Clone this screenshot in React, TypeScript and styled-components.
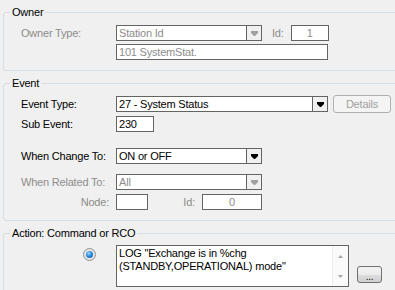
import React from 'react';
import styled, { createGlobalStyle } from 'styled-components';

const GlobalStyle = createGlobalStyle`
  html, body { margin: 0; padding: 0; background: #f0f0f0; overflow: hidden; }
  body {
    font-family: "Liberation Sans", Arial, sans-serif;
    font-size: 11px;
    letter-spacing: -0.2px;
    color: #000;
  }
`;

const Page = styled.div`
  width: 395px;
  height: 290px;
  overflow: hidden;
  padding-left: 3px;
  box-sizing: border-box;
  display: flex;
  flex-direction: column;
`;

const Group = styled.section<{ $top: number; $padTop: number }>`
  position: relative;
  flex: none;
  width: 420px;
  margin-top: ${p => p.$top}px;
  padding: ${p => p.$padTop}px 0 10px 17px;
  border: 1px solid #d5dfe5;
  border-radius: 3px;
  box-sizing: border-box;
`;

const Title = styled.span`
  position: absolute;
  top: -7px;
  left: 6px;
  padding: 0 2px;
  line-height: 13px;
  background: #f0f0f0;
`;

const Row = styled.div<{ $mt?: number }>`
  display: grid;
  grid-template-columns: 95px auto;
  align-items: center;
  margin-top: ${p => p.$mt ?? 0}px;
`;

const Label = styled.span<{ $disabled?: boolean; $right?: boolean }>`
  color: ${p => (p.$disabled ? '#8c8c8c' : '#000')};
  text-align: ${p => (p.$right ? 'right' : 'left')};
  padding-right: ${p => (p.$right ? 7 : 0)}px;
  line-height: 13px;
  white-space: nowrap;
`;

const Fields = styled.div<{ $w?: number }>`
  display: flex;
  align-items: center;
  width: ${p => (p.$w ? `${p.$w}px` : 'auto')};
`;

const ComboBox = styled.div<{ $w: number; $disabled?: boolean }>`
  display: flex;
  width: ${p => p.$w}px;
  height: 16px;
  box-sizing: border-box;
  border: 1px solid #646464;
  background: #fff;
  color: ${p => (p.$disabled ? '#8c8c8c' : '#000')};
`;

const ComboText = styled.span`
  flex: 1;
  padding-left: 2px;
  line-height: 14px;
  white-space: nowrap;
  overflow: hidden;
`;

const DropButton = styled.span`
  display: flex;
  align-items: center;
  justify-content: center;
  width: 15px;
  box-sizing: border-box;
  border-left: 1px solid #646464;
  background: #f0f0f0;
`;

const TextBox = styled.div<{ $w: number; $disabled?: boolean; $center?: boolean }>`
  width: ${p => p.$w}px;
  height: 16px;
  box-sizing: border-box;
  border: 1px solid #646464;
  background: #fff;
  padding: 0 2px;
  line-height: 14px;
  white-space: nowrap;
  overflow: hidden;
  color: ${p => (p.$disabled ? '#8c8c8c' : '#000')};
  text-align: ${p => (p.$center ? 'center' : 'left')};
`;

const InlineLabel = styled(Label)<{ $ml?: number; $auto?: boolean }>`
  margin-left: ${p => (p.$auto ? 'auto' : `${p.$ml ?? 0}px`)};
  margin-right: 7px;
`;

const PushButton = styled.button<{ $w: number; $h: number; $disabled?: boolean }>`
  width: ${p => p.$w}px;
  height: ${p => p.$h}px;
  padding: 0;
  font: inherit;
  letter-spacing: inherit;
  border: 1px solid ${p => (p.$disabled ? '#adb2b5' : '#707070')};
  border-radius: 3px;
  color: ${p => (p.$disabled ? '#a0a0a0' : '#000')};
  background: ${p =>
    p.$disabled
      ? '#f4f4f4'
      : 'linear-gradient(#f2f2f2 0%, #ebebeb 50%, #dddddd 51%, #cfcfcf 100%)'};
`;

const DetailsButton = styled(PushButton)`
  margin-left: 5px;
`;

const DotsButton = styled(PushButton)`
  align-self: flex-end;
  margin: 0 0 4px 8px;
  line-height: 20px;
  font-size: 10px;
`;

const Radio = styled.span`
  justify-self: end;
  align-self: start;
  margin: 3px 20px 0 0;
  width: 13px;
  height: 13px;
  box-sizing: border-box;
  border-radius: 50%;
  border: 1px solid #8e8f8f;
  background: radial-gradient(circle at 50% 50%, #f6f6f6 0%, #dcdcdc 100%);
  display: flex;
  align-items: center;
  justify-content: center;

  &::after {
    content: '';
    width: 7px;
    height: 7px;
    border-radius: 50%;
    background: radial-gradient(circle at 40% 35%, #a9dcff 0%, #2a8ae0 45%, #0d4f9a 100%);
  }
`;

const ActionField = styled.div`
  display: flex;
`;

const TextArea = styled.div`
  display: flex;
  width: 233px;
  height: 42px;
  box-sizing: border-box;
  border: 1px solid #646464;
  background: #fff;
`;

const AreaText = styled.div`
  flex: 1;
  padding: 1px 0 0 2px;
  line-height: 13px;
  white-space: pre;
`;

const ScrollBar = styled.div`
  width: 16px;
  display: flex;
  flex-direction: column;
  justify-content: space-between;
  align-items: center;
  padding: 9px 0 8px;
  box-sizing: border-box;
  background: #fafafa;
  border-left: 1px solid #ededed;
`;

const Arrow = ({ color = '#000' }: { color?: string }) => (
  <svg width="7" height="5" viewBox="0 0 7 5">
    <polygon points="0,0 7,0 7,2 4,5 3,5 0,2" fill={color} />
  </svg>
);

const ScrollArrow = ({ up = false }: { up?: boolean }) => (
  <svg width="5" height="3" viewBox="0 0 5 3">
    <polygon points={up ? '2.5,0 5,3 0,3' : '0,0 5,0 2.5,3'} fill="#a6a6a6" />
  </svg>
);

const Combo = ({ w, text, disabled }: { w: number; text: string; disabled?: boolean }) => (
  <ComboBox $w={w} $disabled={disabled}>
    <ComboText>{text}</ComboText>
    <DropButton>
      <Arrow color={disabled ? '#a0a0a0' : '#000'} />
    </DropButton>
  </ComboBox>
);

const App: React.FC = () => (
  <Page>
    <GlobalStyle />

    <Group $top={12} $padTop={12}>
      <Title>Owner</Title>
      <Row>
        <Label $disabled>Owner Type:</Label>
        <Fields>
          <Combo w={146} text="Station Id" disabled />
          <InlineLabel $disabled $ml={10}>Id:</InlineLabel>
          <TextBox $w={38} $disabled $center>1</TextBox>
        </Fields>
      </Row>
      <Row $mt={3}>
        <span />
        <TextBox $w={212} $disabled>101 SystemStat.</TextBox>
      </Row>
    </Group>

    <Group $top={12} $padTop={11}>
      <Title>Event</Title>
      <Row>
        <Label>Event Type:</Label>
        <Fields>
          <Combo w={212} text="27 - System Status" />
          <DetailsButton $w={58} $h={18} $disabled>Details</DetailsButton>
        </Fields>
      </Row>
      <Row $mt={3}>
        <Label>Sub Event:</Label>
        <TextBox $w={38}>230</TextBox>
      </Row>
      <Row $mt={16}>
        <Label>When Change To:</Label>
        <Combo w={146} text="ON or OFF" />
      </Row>
      <Row $mt={10}>
        <Label $disabled>When Related To:</Label>
        <Combo w={146} text="All" disabled />
      </Row>
      <Row $mt={4}>
        <Label $disabled $right>Node:</Label>
        <Fields $w={146}>
          <TextBox $w={32} />
          <InlineLabel $disabled $auto>Id:</InlineLabel>
          <TextBox $w={60} $disabled $center>0</TextBox>
        </Fields>
      </Row>
    </Group>

    <Group $top={12} $padTop={11}>
      <Title>Action: Command or RCO</Title>
      <Row>
        <Radio />
        <ActionField>
          <TextArea>
            <AreaText>{'LOG "Exchange is in %chg\n(STANDBY,OPERATIONAL) mode"'}</AreaText>
            <ScrollBar>
              <ScrollArrow up />
              <ScrollArrow />
            </ScrollBar>
          </TextArea>
          <DotsButton $w={25} $h={17}>...</DotsButton>
        </ActionField>
      </Row>
    </Group>
  </Page>
);

export default App;
